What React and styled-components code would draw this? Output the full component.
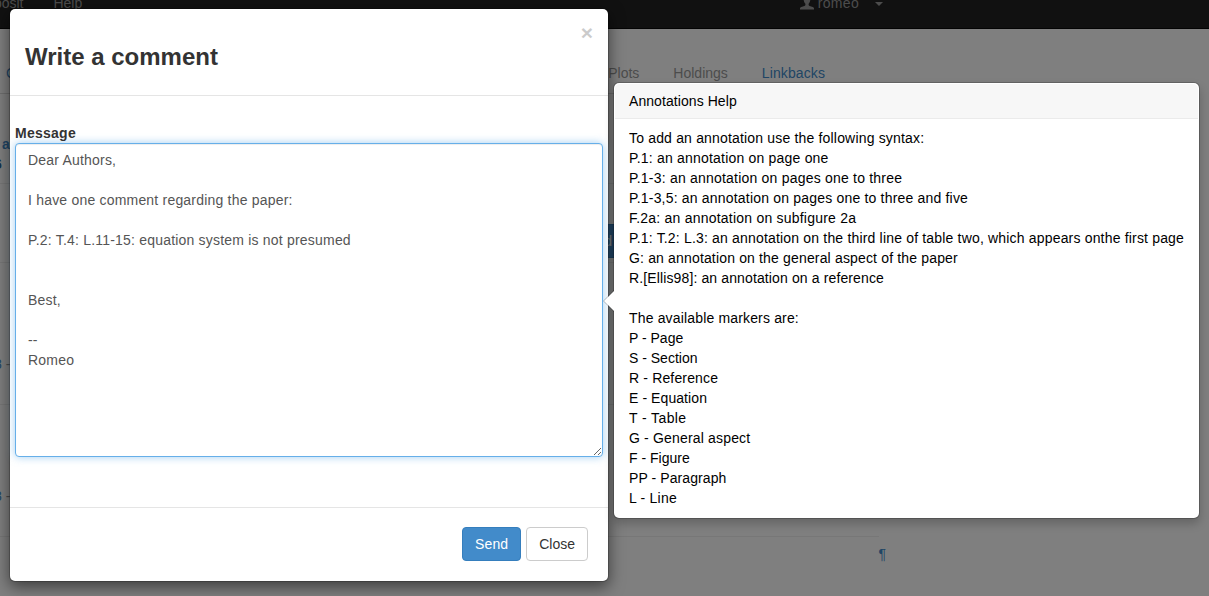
import React from "react";
import styled, { createGlobalStyle } from "styled-components";

const Global = createGlobalStyle`
  *, *::before, *::after { box-sizing: border-box; }
  html, body { margin: 0; height: 100%; overflow: hidden; }
  body {
    font-family: "Liberation Sans", Arial, sans-serif;
    font-size: 14px;
    line-height: 20px;
    color: #333;
    background: #fff;
  }
`;

const Screen = styled.div`
  position: relative;
  height: 596px;
  overflow: hidden;
`;

const Navbar = styled.header`
  display: flow-root;
  height: 29px;
  background: #222;
  border-bottom: 1px solid #080808;
`;

const NavInner = styled.div`
  display: flex;
  justify-content: space-between;
  width: 883px;
  color: #999;
`;

const NavGroup = styled.div`
  display: flex;
  align-items: center;
  gap: ${(p) => p.$gap}px;
  margin-left: ${(p) => p.$offset || 0}px;
  height: 20px;
  margin-top: -7px;
`;

const User = styled.span`
  display: flex;
  align-items: center;
  gap: 4px;
  letter-spacing: 0.3px;
`;

const Caret = styled.span`
  border: 4px solid transparent;
  border-top-color: #999;
  border-bottom: 0;
  margin-top: 2px;
`;

const Content = styled.main`
  width: 879px;
`;

const Tabs = styled.nav`
  display: flex;
  justify-content: space-between;
  height: 65px;
  padding: 34px 54px 0 6px;
  border-bottom: 1px solid #ddd;
`;

const TabGroup = styled.div`
  display: flex;
  gap: 34px;
`;

const Tab = styled.a`
  color: ${(p) => (p.$muted ? "#999" : "#428bca")};
  letter-spacing: ${(p) => (p.$muted ? 0 : 0.1)}px;
`;

const Section = styled.section`
  height: ${(p) => p.$height}px;
  padding-top: ${(p) => p.$top || 0}px;
  border-bottom: 1px solid #eee;
`;

const AuthorLine = styled.div`
  font-weight: bold;
  color: ${(p) => p.$color};
  margin-left: ${(p) => p.$shift}px;
`;

const CommentDate = styled.div`
  color: #999;
  margin-left: -6px;

  a { color: #428bca; }
`;

const ReviewButton = styled.button`
  display: block;
  height: 34px;
  width: 110px;
  margin-left: 515px;
  padding: 0 12px;
  border: 1px solid #357ebd;
  border-radius: 4px;
  background: #428bca;
  color: #fff;
  font: inherit;
  text-align: right;
`;

const Permalink = styled.a`
  display: block;
  margin-top: 7px;
  text-align: right;
  margin-right: -7px;
  color: #428bca;
`;

const Backdrop = styled.div`
  position: absolute;
  inset: 0;
  background: rgba(0, 0, 0, 0.5);
`;

const Modal = styled.div`
  position: absolute;
  left: 9px;
  top: 8px;
  width: 600px;
  height: 574px;
  display: flex;
  flex-direction: column;
  background: #fff;
  background-clip: padding-box;
  border: 1px solid rgba(0, 0, 0, 0.2);
  border-radius: 6px;
  box-shadow: 0 5px 15px rgba(0, 0, 0, 0.5);
`;

const ModalHeader = styled.div`
  display: flex;
  justify-content: space-between;
  height: 87px;
  padding: 15px;
  border-bottom: 1px solid #e5e5e5;
`;

const Title = styled.h3`
  margin: 20px 0 0;
  font-size: 24px;
  line-height: 26px;
  font-weight: bold;
`;

const Dismiss = styled.button`
  border: 0;
  padding: 0;
  margin: -2px 0 0;
  height: 21px;
  background: transparent;
  font: bold 21px/21px "Liberation Sans", Arial, sans-serif;
  color: #000;
  opacity: 0.2;
  text-shadow: 0 1px 0 #fff;
`;

const ModalBody = styled.div`
  flex: 1;
  padding: 27px 5px 0;
`;

const Label = styled.label`
  display: block;
  font-weight: bold;
  letter-spacing: 0.26px;
`;

const Message = styled.textarea`
  display: block;
  width: 588px;
  height: 314px;
  padding: 6px 12px;
  border: 1px solid #66afe9;
  border-radius: 4px;
  outline: 0;
  background: #fff;
  color: #555;
  font: inherit;
  letter-spacing: 0.2px;
  resize: both;
  box-shadow: inset 0 1px 1px rgba(0, 0, 0, 0.075), 0 0 8px rgba(102, 175, 233, 0.6);
`;

const ModalFooter = styled.div`
  display: flex;
  justify-content: flex-end;
  gap: 5px;
  height: 74px;
  padding: 19px 20px 20px;
  border-top: 1px solid #e5e5e5;
`;

const Button = styled.button`
  height: 34px;
  padding: 6px 12px;
  border: 1px solid ${(p) => (p.$primary ? "#357ebd" : "#ccc")};
  border-radius: 4px;
  background: ${(p) => (p.$primary ? "#428bca" : "#fff")};
  color: ${(p) => (p.$primary ? "#fff" : "#333")};
  font: inherit;
  letter-spacing: ${(p) => (p.$primary ? 0.1 : 0)}px;
`;

const Popover = styled.aside`
  position: absolute;
  left: 613px;
  top: 82px;
  width: 587px;
  height: 437px;
  padding: 1px;
  background: #fff;
  background-clip: padding-box;
  border: 1px solid rgba(0, 0, 0, 0.2);
  border-radius: 6px;
  box-shadow: 0 5px 10px rgba(0, 0, 0, 0.2);
  color: #000;
`;

const Arrow = styled.span`
  position: absolute;
  left: -11px;
  top: 207px;
  border: 11px solid transparent;
  border-left: 0;
  border-right-color: rgba(0, 0, 0, 0.25);

  &::after {
    content: "";
    position: absolute;
    left: 1px;
    top: -10px;
    border: 10px solid transparent;
    border-left: 0;
    border-right-color: #fff;
  }
`;

const PopoverTitle = styled.h4`
  margin: 0;
  height: 35px;
  padding: 8px 14px;
  font-size: 14px;
  line-height: 18px;
  font-weight: normal;
  letter-spacing: 0.07px;
  background: #f7f7f7;
  border-bottom: 1px solid #ebebeb;
  border-radius: 5px 5px 0 0;
`;

const PopoverBody = styled.div`
  padding: 9px 14px;
`;

const HelpLine = styled.div`
  white-space: nowrap;
  letter-spacing: ${(p) => p.$tracking}px;
`;

const HelpList = styled.div`
  & + & { margin-top: 20px; }
`;

const syntax = [
  ["To add an annotation use the following syntax:", 0.175],
  ["P.1: an annotation on page one", 0.2],
  ["P.1-3: an annotation on pages one to three", 0.21],
  ["P.1-3,5: an annotation on pages one to three and five", 0.19],
  ["F.2a: an annotation on subfigure 2a", 0.22],
  ["P.1: T.2: L.3: an annotation on the third line of table two, which appears onthe first page", 0.178],
  ["G: an annotation on the general aspect of the paper", 0.16],
  ["R.[Ellis98]: an annotation on a reference", 0.125],
];

const markers = [
  ["The available markers are:", 0.16],
  ["P - Page", 0],
  ["S - Section", 0],
  ["R - Reference", 0.15],
  ["E - Equation", 0.08],
  ["T - Table", 0.4],
  ["G - General aspect", 0.17],
  ["F - Figure", 0],
  ["PP - Paragraph", 0.08],
  ["L - Line", 0.22],
];

const message = `Dear Authors,

I have one comment regarding the paper:

P.2: T.4: L.11-15: equation system is not presumed


Best,

--
Romeo`;

const UserIcon = () => (
  <svg width="14" height="14" viewBox="0 0 14 14" fill="#999">
    <path d="M7 0C4.8 0 3.7 1.500 3.700 3.600c0 1.700.7 3.200 1.700 4.100v1c0 .7-.4 1-1 1.300L1.300 11.100C.4 11.500 0 12 0 12.700v.8h14v-.8c0-.7-.4-1.200-1.300-1.600L9.600 10c-.6-.3-1-.6-1-1.300v-1c1-.9 1.700-2.400 1.700-4.100C10.300 1.500 9.200 0 7 0z" />
  </svg>
);

export default function App() {
  return (
    <Screen>
      <Global />
      <Navbar>
        <NavInner>
          <NavGroup $gap={30} $offset={-24}>
            <span>Deposit</span>
            <span>Help</span>
          </NavGroup>
          <NavGroup $gap={16}>
            <User>
              <UserIcon />
              romeo
            </User>
            <Caret />
          </NavGroup>
        </NavInner>
      </Navbar>
      <Content>
        <Tabs>
          <Tab>C</Tab>
          <TabGroup>
            <Tab $muted>Plots</Tab>
            <Tab $muted>Holdings</Tab>
            <Tab>Linkbacks</Tab>
          </TabGroup>
        </Tabs>
        <Section $height={90} $top={40}>
          <AuthorLine $color="#428bca" $shift={2}>a</AuthorLine>
          <AuthorLine $color="#2a6496" $shift={-6}>6</AuthorLine>
        </Section>
        <Section $height={79} $top={40}>
          <ReviewButton>d</ReviewButton>
        </Section>
        <Section $height={142} $top={91}>
          <CommentDate><a>8</a> -</CommentDate>
        </Section>
        <Section $height={132} $top={81}>
          <CommentDate><a>8</a> -</CommentDate>
        </Section>
        <Permalink>¶</Permalink>
      </Content>
      <Backdrop />
      <Modal>
        <ModalHeader>
          <Title>Write a comment</Title>
          <Dismiss aria-label="Dismiss">×</Dismiss>
        </ModalHeader>
        <ModalBody>
          <Label htmlFor="message">Message</Label>
          <Message id="message" defaultValue={message} spellCheck={false} />
        </ModalBody>
        <ModalFooter>
          <Button $primary>Send</Button>
          <Button>Close</Button>
        </ModalFooter>
      </Modal>
      <Popover>
        <Arrow />
        <PopoverTitle>Annotations Help</PopoverTitle>
        <PopoverBody>
          <HelpList>
            {syntax.map(([line, tracking]) => (
              <HelpLine key={line} $tracking={tracking}>{line}</HelpLine>
            ))}
          </HelpList>
          <HelpList>
            {markers.map(([line, tracking]) => (
              <HelpLine key={line} $tracking={tracking}>{line}</HelpLine>
            ))}
          </HelpList>
        </PopoverBody>
      </Popover>
    </Screen>
  );
}
